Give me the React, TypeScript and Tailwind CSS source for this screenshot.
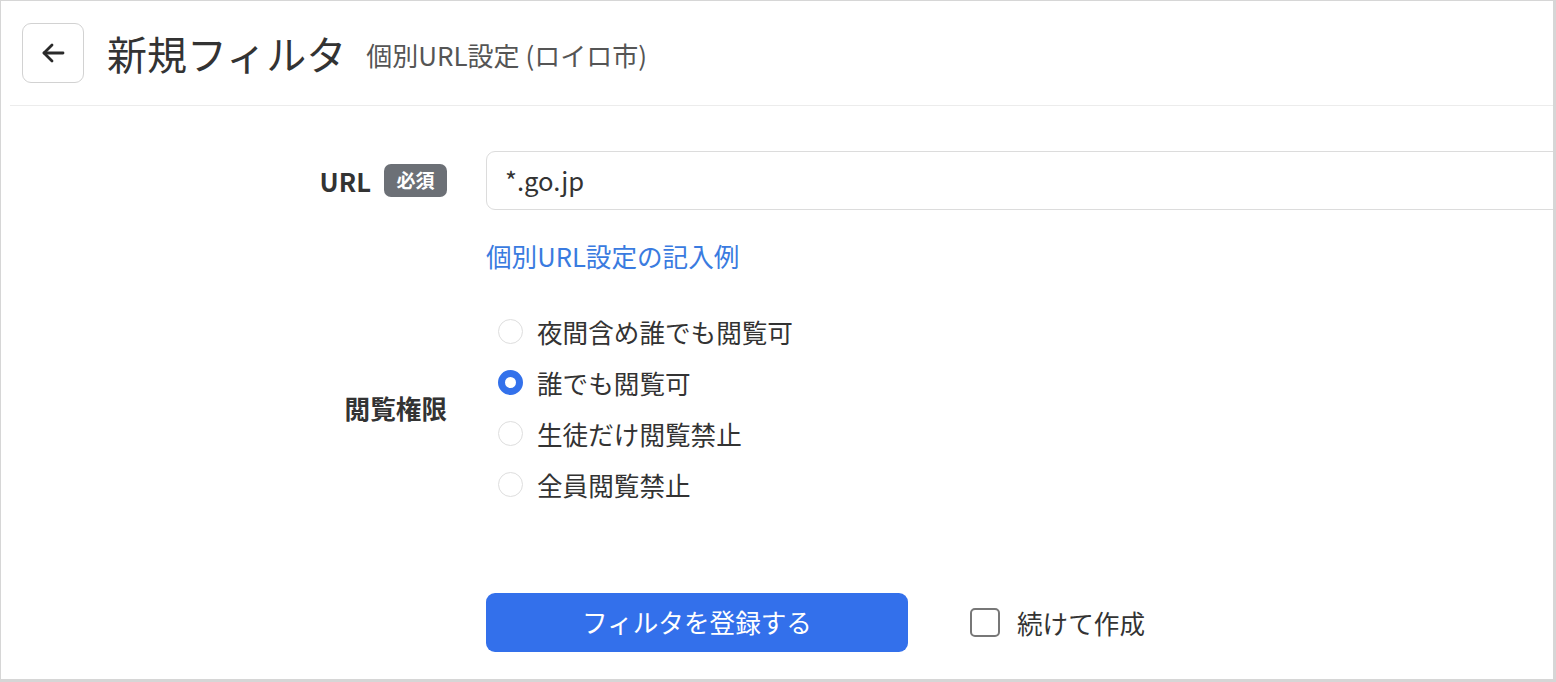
import React from "react";

const JP = { fontFamily: '"Noto Sans CJK JP", "Noto Sans", sans-serif' };

const OPTIONS = ["夜間含め誰でも閲覧可", "誰でも閲覧可", "生徒だけ閲覧禁止", "全員閲覧禁止"];

export default function App() {
  return (
    <div
      className="h-[682px] w-[1556px] overflow-hidden border-t border-l border-r-[3px] border-b-[3px] border-[#d6d6d6] bg-white text-[#333]"
      style={JP}
    >
      {/* header */}
      <div className="flex h-[104px] items-center pl-[21px]">
        <button className="flex h-[60px] w-[62px] shrink-0 items-center justify-center rounded-[9px] border border-[#d2d2d2] bg-white">
          <svg width="24" height="20" viewBox="0 0 24 20" fill="none" stroke="#2a2a2a" strokeWidth="2.8" strokeLinecap="round" strokeLinejoin="round">
            <path d="M22 10H3" />
            <path d="M11 2 3 10l8 8" />
          </svg>
        </button>
        <h1 className="ml-[23px] text-[40px] leading-none text-[#333]">新規フィルタ</h1>
        <span className="ml-[20px] mt-[4px] text-[26px] leading-none text-[#555]">個別URL設定 (ロイロ市)</span>
      </div>
      <div className="ml-[9px] border-t border-[#ececec]" />

      {/* form */}
      <div className="mt-[45px] flex flex-col">
        <div className="flex items-center">
          <div className="flex w-[446px] shrink-0 items-center justify-end">
            <span className="text-[25.6px] font-bold leading-none">URL</span>
            <span className="ml-[13px] flex h-[33px] w-[63px] items-center justify-center rounded-[7px] bg-[#6c7076] text-[19px] font-bold text-white">
              必須
            </span>
          </div>
          <div className="ml-[39px] flex h-[59px] w-[1100px] shrink-0 items-center rounded-[9px] border border-[#dcdcdc] pl-[18px] text-[25.6px] text-[#333]">
            *.go.jp
          </div>
        </div>

        <div className="ml-[485px] mt-[28px] text-[25.6px] leading-[36px] text-[#3a7be0]">個別URL設定の記入例</div>

        <div className="mt-[32px] flex items-center">
          <div className="w-[446px] shrink-0 text-right text-[25.6px] font-bold">閲覧権限</div>
          <div className="ml-[51px] flex flex-col">
            {OPTIONS.map((label, i) => (
              <div key={label} className="flex h-[51px] items-center">
                {i === 1 ? (
                  <span className="h-[25px] w-[25px] rounded-full border-[7px] border-[#3371eb] bg-white" />
                ) : (
                  <span className="h-[25px] w-[25px] rounded-full border border-[#dedede] bg-white" />
                )}
                <span className="ml-[14px] text-[25.6px] leading-none text-[#333]">{label}</span>
              </div>
            ))}
          </div>
        </div>

        <div className="ml-[485px] mt-[83px] flex items-center">
          <button className="flex h-[59px] w-[422px] shrink-0 items-center justify-center rounded-[9px] bg-[#3370eb] text-[25.6px] text-white">
            フィルタを登録する
          </button>
          <label className="ml-[62px] flex items-center">
            <span className="h-[29px] w-[30px] rounded-[5px] border-2 border-[#777] bg-white" />
            <span className="ml-[17px] text-[25.6px] leading-none text-[#333]">続けて作成</span>
          </label>
        </div>
      </div>
    </div>
  );
}
